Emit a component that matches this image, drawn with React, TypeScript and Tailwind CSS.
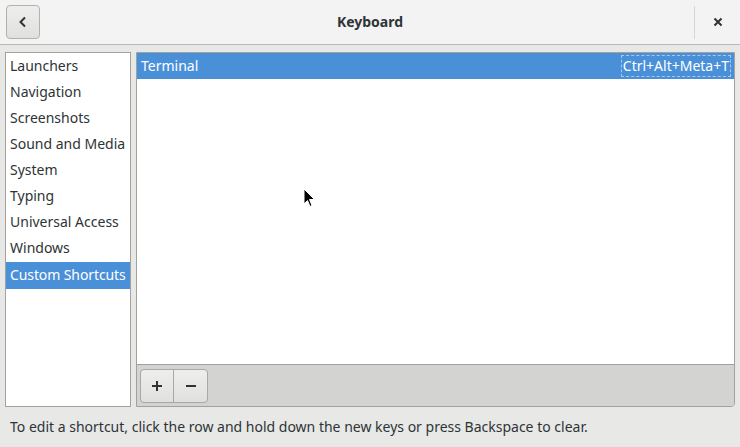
import React from "react";

const items = [
  "Launchers",
  "Navigation",
  "Screenshots",
  "Sound and Media",
  "System",
  "Typing",
  "Universal Access",
  "Windows",
];

export default function App() {
  return (
    <div
      className="relative w-[740px] h-[447px] bg-[#e8e8e7] text-[#2e3436] flex flex-col overflow-hidden"
      style={{ fontFamily: '"Noto Sans", "DejaVu Sans", sans-serif' }}
    >
      {/* header */}
      <div className="h-[45px] bg-[#f3f3f3] border-b border-[#b8b8b5] flex items-center relative shrink-0">
        <div className="ml-[6px] w-[34px] h-[34px] rounded-[4px] border border-[#b1b1ae] bg-gradient-to-b from-[#eeeeec] to-[#e0e0de] flex items-center justify-center">
          <svg width="14" height="14" viewBox="0 0 14 14">
            <path d="M9 2.5 L4.5 7 L9 11.5" fill="none" stroke="#2e3436" strokeWidth="2" />
          </svg>
        </div>
        <div className="absolute left-0 right-0 top-0 h-[44px] flex items-center justify-center pointer-events-none">
          <span className="text-[14px] font-bold text-[#2e3436] pb-[1px]">Keyboard</span>
        </div>
        <div className="ml-auto h-[33px] w-px bg-[#d6d6d4]" />
        <div className="w-[45px] h-[44px] flex items-center justify-center">
          <svg width="10" height="10" viewBox="0 0 10 10">
            <path d="M1.5 1.5 L8.5 8.5 M8.5 1.5 L1.5 8.5" stroke="#2e3436" strokeWidth="2" />
          </svg>
        </div>
      </div>

      {/* body */}
      <div className="flex gap-[5px] px-[5px] pt-[7px] h-[362px] shrink-0">
        <div className="w-[126px] h-[355px] bg-white border border-[#a1a1a0] flex flex-col text-[14px] overflow-hidden">
          {items.map((t) => (
            <div key={t} className="h-[26px] flex items-center px-[4px] pb-[2px] text-[#2e3436] whitespace-nowrap">
              {t}
            </div>
          ))}
          <div className="mt-px h-[27px] flex items-center px-[4px] pb-[2px] bg-[#4a90d9] text-white whitespace-nowrap tracking-[-0.1px]">
            Custom Shortcuts
          </div>
        </div>
        <div className="flex-1 h-[355px] border border-[#a1a1a0] rounded-br-[4px] flex flex-col overflow-hidden">
          <div className="flex-1 bg-white flex flex-col">
            <div className="h-[26px] bg-[#4a90d9] text-white text-[14px] flex items-center pl-[4px] pr-[3px]">
              <span className="pb-[2px]">Terminal</span>
              <span className="ml-auto border border-dashed border-[#a8c8ec] px-[1px] h-[22px] flex items-center pb-[2px]">
                Ctrl+Alt+Meta+T
              </span>
            </div>
          </div>
          <div className="h-[42px] border-t border-[#a1a1a0] bg-[#d3d3d1] flex items-center px-[3px]">
            <div className="flex h-[34px] rounded-[4px] border border-[#a8a8a6] bg-gradient-to-b from-[#eeeeec] to-[#e0e0de]">
              <div className="w-[33px] flex items-center justify-center border-r border-[#a8a8a6]">
                <svg width="12" height="12" viewBox="0 0 12 12">
                  <path d="M6 1 V11 M1 6 H11" stroke="#2e3436" strokeWidth="2" />
                </svg>
              </div>
              <div className="w-[33px] flex items-center justify-center">
                <svg width="12" height="12" viewBox="0 0 12 12">
                  <path d="M1 6 H11" stroke="#2e3436" strokeWidth="2" />
                </svg>
              </div>
            </div>
          </div>
        </div>
      </div>

      {/* footer */}
      <div className="flex-1 flex items-center px-[10px] pb-[1px] text-[14px] text-[#2e3436] whitespace-nowrap">
        To edit a shortcut, click the row and hold down the new keys or press Backspace to clear.
      </div>

      {/* mouse cursor */}
      <svg className="absolute left-[303px] top-[188px]" width="14" height="22" viewBox="0 0 14 22">
        <path d="M1 1 L1 16 L4.5 12.5 L7 18.5 L9 17.5 L6.5 11.5 L11.5 11.5 Z" fill="#000" stroke="#fff" strokeWidth="1" />
      </svg>
    </div>
  );
}
